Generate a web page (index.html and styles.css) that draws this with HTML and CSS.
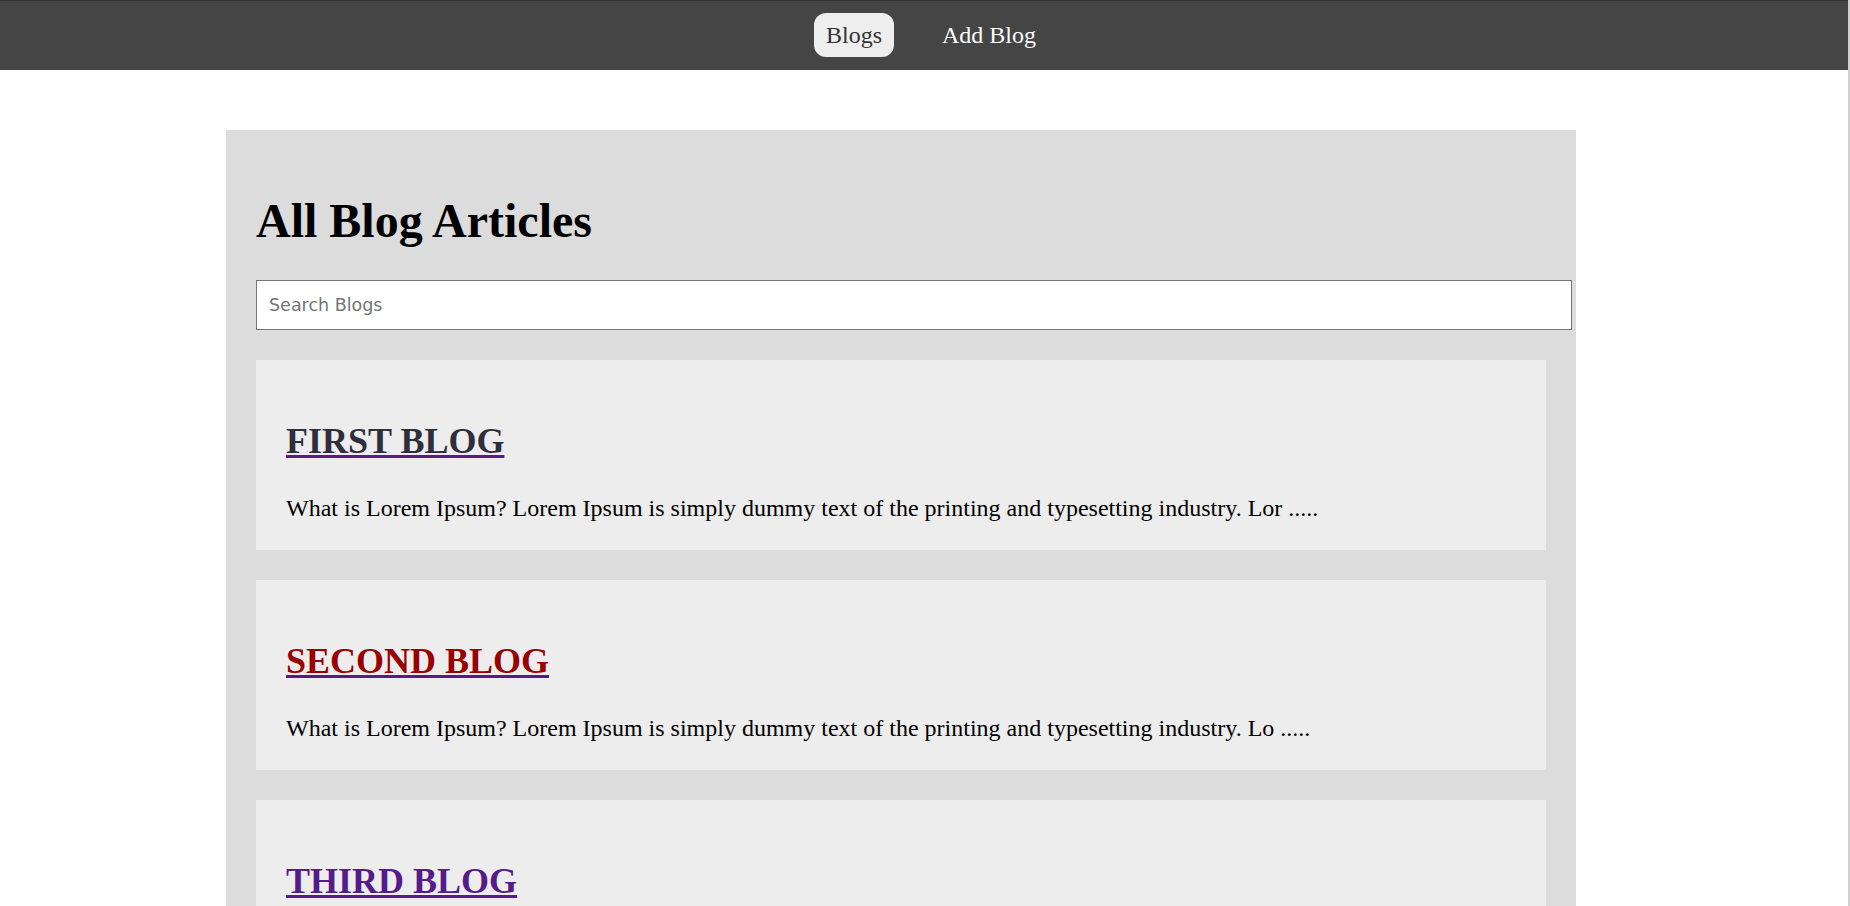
FILE: index.html
```html
<!DOCTYPE html>
<html lang="en">
<head>
<meta charset="utf-8">
<title>Blogs</title>
<link rel="stylesheet" href="styles.css">
</head>
<body>
<nav class="navbar">
  <a class="nav-link active" href="#">Blogs</a>
  <a class="nav-link" href="#">Add Blog</a>
</nav>
<main class="container">
  <h1 class="page-title">All Blog Articles</h1>
  <input class="search" type="text" placeholder="Search Blogs">
  <section class="card">
    <h2 class="card-title"><a href="#" class="title-link"><span class="c-dark">FIRST BLOG</span></a></h2>
    <p class="card-text">What is Lorem Ipsum? Lorem Ipsum is simply dummy text of the printing and typesetting industry. Lor .....</p>
  </section>
  <section class="card">
    <h2 class="card-title"><a href="#" class="title-link"><span class="c-red">SECOND BLOG</span></a></h2>
    <p class="card-text">What is Lorem Ipsum? Lorem Ipsum is simply dummy text of the printing and typesetting industry. Lo .....</p>
  </section>
  <section class="card">
    <h2 class="card-title"><a href="#" class="title-link"><span class="c-purple">THIRD BLOG</span></a></h2>
    <p class="card-text">What is Lorem Ipsum? Lorem Ipsum is simply dummy text of the printing and typesetting industry. L .....</p>
  </section>
</main>
</body>
</html>
```

FILE: styles.css
```css
html {
  background: #ffffff;
}

body {
  margin: 0;
  font-family: "Liberation Serif", "Times New Roman", serif;
  border-right: 2px solid #cfcfcf;
  min-height: 906px;
}

.navbar {
  height: 69px;
  border-top: 1px solid #333333;
  background: #454545;
  display: flex;
  align-items: center;
  justify-content: center;
  gap: 36px;
  padding-left: 14px;
  padding-bottom: 1px;
  box-sizing: border-box;
  height: 70px;
}

.nav-link {
  font-size: 24px;
  line-height: 28px;
  padding: 8px 12px;
  border-radius: 12px;
  color: #ffffff;
  text-decoration: none;
}

.nav-link.active {
  background: #eeeeee;
  color: #333333;
}

.container {
  width: 1290px;
  margin: 60px 0 0 226px;
  padding: 30px 30px 1px;
  background: #dcdcdc;
}

.page-title {
  font-size: 48px;
  font-weight: bold;
  line-height: 55px;
  margin: 33px 0 32px;
  color: #000000;
}

.search {
  display: block;
  width: 100%;
  height: 18px;
  padding: 15px 12px;
  margin: 0 0 30px;
  border: 1px solid #767676;
  background: #ffffff;
  font-family: "DejaVu Sans", Verdana, sans-serif;
  font-size: 17.5px;
  outline: none;
}

.search::placeholder {
  color: #757575;
}

.card {
  background: #ededed;
  padding: 30px 30px 30px;
  margin-bottom: 30px;
  height: 130px;
}

.card-title {
  font-size: 36px;
  font-weight: bold;
  line-height: 41px;
  margin: 31px 0 32px;
}

.title-link {
  color: #551a8b;
  text-decoration: underline;
}

.c-dark {
  color: #2e2f3a;
}

.c-red {
  color: #990000;
}

.c-purple {
  color: #551a8b;
}

.card-text {
  font-size: 24px;
  line-height: 28px;
  margin: 0;
  color: #000000;
}
```
